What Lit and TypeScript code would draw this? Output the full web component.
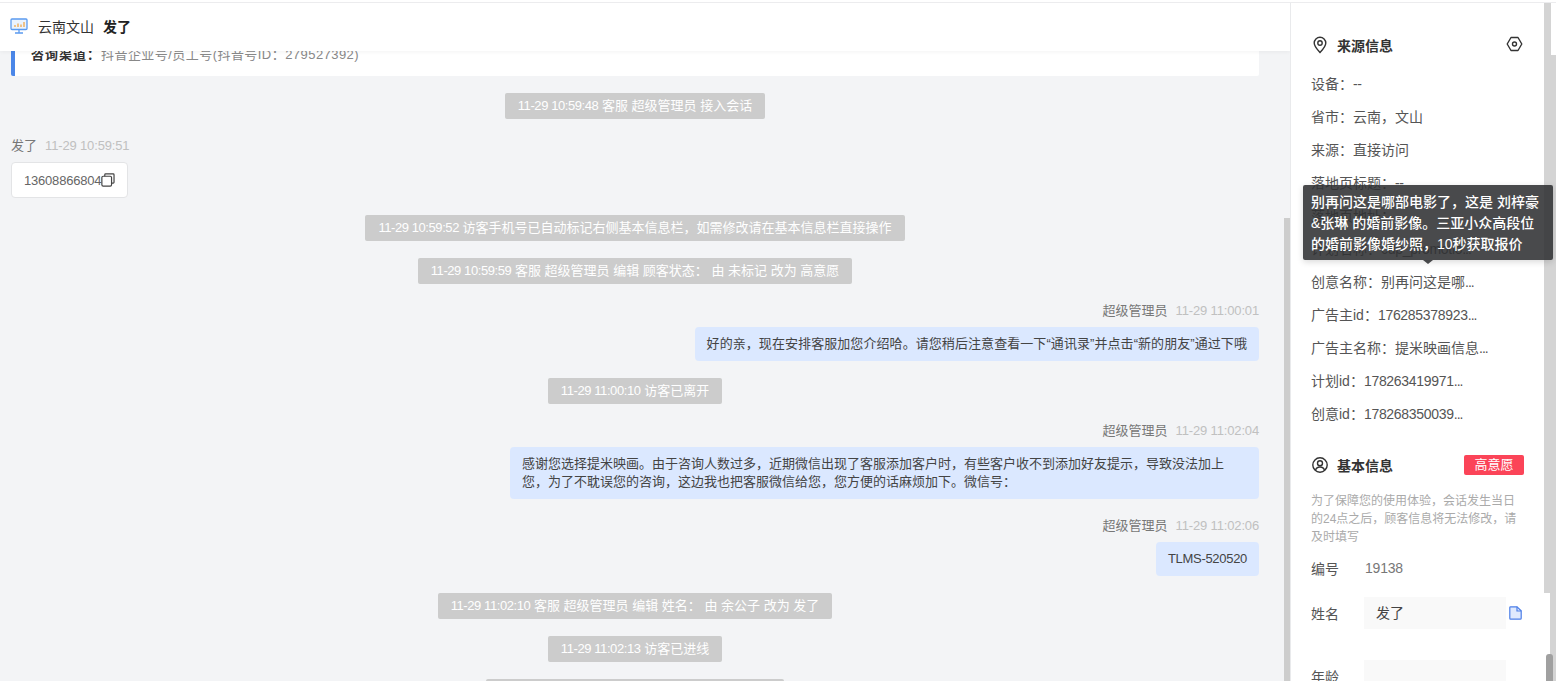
import { LitElement, html, css } from "lit";
import { customElement } from "lit/decorators.js";

type Row =
  | { k: "sys"; time: string; t: string }
  | { k: "in"; name: string; time: string; t: string }
  | { k: "out"; name: string; time: string; t: string };

const ROWS: Row[] = [
  { k: "sys", time: "11-29 10:59:48", t: " 客服 超级管理员 接入会话" },
  { k: "in", name: "发了", time: "11-29 10:59:51", t: "13608866804" },
  { k: "sys", time: "11-29 10:59:52", t: " 访客手机号已自动标记右侧基本信息栏，如需修改请在基本信息栏直接操作" },
  { k: "sys", time: "11-29 10:59:59", t: " 客服 超级管理员 编辑 顾客状态： 由 未标记 改为 高意愿" },
  { k: "out", name: "超级管理员", time: "11-29 11:00:01", t: "好的亲，现在安排客服加您介绍哈。请您稍后注意查看一下“通讯录”并点击“新的朋友”通过下哦" },
  { k: "sys", time: "11-29 11:00:10", t: " 访客已离开" },
  { k: "out", name: "超级管理员", time: "11-29 11:02:04", t: "感谢您选择提米映画。由于咨询人数过多，近期微信出现了客服添加客户时，有些客户收不到添加好友提示，导致没法加上您，为了不耽误您的咨询，这边我也把客服微信给您，您方便的话麻烦加下。微信号：" },
  { k: "out", name: "超级管理员", time: "11-29 11:02:06", t: "TLMS-520520" },
  { k: "sys", time: "11-29 11:02:10", t: " 客服 超级管理员 编辑 姓名： 由 余公子 改为 发了" },
  { k: "sys", time: "11-29 11:02:13", t: " 访客已进线" },
  { k: "sys", time: "11-29 11:02:20", t: " 客服 超级管理员 发送了一条消息" },
];

const INFO = [
  "设备：--",
  "省市：云南，文山",
  "来源：直接访问",
  "落地页标题：--",
  "落地页地址：--",
  "计划名称：cdp_promotio...",
  "创意名称：别再问这是哪...",
  "广告主id：176285378923...",
  "广告主名称：提米映画信息...",
  "计划id：178263419971...",
  "创意id：178268350039...",
];

@customElement("app-root")
export class AppRoot extends LitElement {
  static styles = css`
    :host {
      display: block;
      width: 1556px;
      height: 681px;
      overflow: hidden;
      background: #fff;
      font-family: "Liberation Sans", "Noto Sans CJK SC", sans-serif;
      font-size: 13px;
      color: #333;
    }
    .app {
      display: flex;
      height: 681px;
      box-sizing: border-box;
      border-top: 1px solid #ececee;
      margin-top: 2px;
    }
    .chat {
      position: relative;
      width: 1290px;
      flex: none;
      background: #f3f4f6;
      overflow: hidden;
      border-right: 1px solid #e9eaec;
      box-sizing: content-box;
    }
    .header {
      position: absolute;
      z-index: 2;
      inset: 0 0 auto 0;
      height: 48px;
      box-sizing: border-box;
      padding: 0 0 3px 10px;
      background: #fff;
      display: flex;
      align-items: center;
      gap: 10px;
      box-shadow: 0 1px 4px rgba(0, 0, 0, 0.05);
      font-size: 14px;
    }
    .header svg { display: block; }
    .header .city { color: #333; }
    .header b { color: #222; font-weight: 700; margin-left: -1px; }
    .thumb {
      position: absolute;
      z-index: 3;
      right: 0;
      top: 215px;
      bottom: 0;
      width: 6px;
      background: #cdcdcd;
    }
    .list {
      display: flex;
      flex-direction: column;
      padding: 27px 31px 0 11px;
      width: 1248px;
    }
    .card {
      height: 46px;
      box-sizing: border-box;
      background: #fff;
      border-left: 4px solid #4a86e8;
      border-radius: 2px;
      padding: 14px 0 0 16px;
      color: #888;
      line-height: 22px;
      margin-bottom: 17px;
      letter-spacing: 0.45px;
    }
    .card b { color: #333; font-weight: 700; letter-spacing: 1px; }
    .sys {
      align-self: center;
      height: 26px;
      line-height: 26px;
      padding: 0 13px;
      background: #ccc;
      color: #fff;
      border-radius: 2px;
      white-space: nowrap;
      margin-bottom: 17px;
    }
    .sys .time { letter-spacing: -0.42px; }
    .meta {
      height: 17px;
      padding-top: 1px;
      line-height: 18px;
      color: #777;
      margin-bottom: 8px;
    }
    .meta span { color: #c0c0c0; margin-left: 8px; letter-spacing: -0.15px; }
    .meta.right { text-align: right; }
    .contact {
      align-self: flex-start;
      height: 36px;
      box-sizing: border-box;
      background: #fff;
      border: 1px solid #e3e4e6;
      border-radius: 4px;
      padding: 0 12px;
      display: flex;
      align-items: center;
      color: #666;
      margin-bottom: 17px;
      letter-spacing: -0.2px;
    }
    .bubble {
      align-self: flex-end;
      max-width: 725px;
      background: #dbe8ff;
      border-radius: 4px;
      padding: 8px 12px;
      line-height: 18px;
      color: #444;
      margin-bottom: 17px;
    }
    .bubble.ascii { letter-spacing: -0.3px; }
    .bubble.quoted { letter-spacing: 0.07px; }
    .panel {
      position: relative;
      flex: none;
      width: 253px;
      box-sizing: border-box;
      padding: 30px 20px 0 20px;
      background: #fff;
      overflow: hidden;
      font-size: 14px;
    }
    .title {
      display: flex;
      align-items: center;
      height: 24px;
      font-weight: 700;
      color: #333;
    }
    .title svg { flex: none; }
    .title .ico { margin: 0 9px 0 1px; }
    .title .end { margin: 0 1px 2px auto; }
    .info {
      height: 33px;
      line-height: 33px;
      color: #555;
      white-space: nowrap;
    }
    .info .num { letter-spacing: -0.3px; }
    .info .dots { letter-spacing: -1px; }
    .infos { margin-top: 11px; margin-bottom: 22px; }
    .tag {
      margin-left: auto;
      width: 60px;
      height: 20px;
      line-height: 20px;
      text-align: center;
      background: #fb4458;
      color: #fff;
      font-weight: 400;
      font-size: 13px;
      border-radius: 2px;
    }
    .note {
      margin-top: 15px;
      font-size: 12px;
      line-height: 18px;
      color: #aaa;
      width: 210px;
    }
    .field {
      display: flex;
      align-items: center;
      color: #555;
    }
    .field .label { width: 53px; flex: none; }
    .field .val { color: #777; margin-left: 1px; letter-spacing: -0.2px; }
    .f-no { height: 18px; margin-top: 13px; }
    .f-name { margin-top: 20px; }
    .f-age { margin-top: 31px; }
    .box {
      width: 142px;
      height: 32px;
      line-height: 32px;
      box-sizing: border-box;
      padding-left: 12px;
      background: #f9f9f9;
      color: #444;
      flex: none;
    }
    .f-name svg { margin-left: 3px; flex: none; }
    .rail {
      position: relative;
      flex: 1;
      width: 12px;
    }
    .rail-a {
      position: absolute;
      left: 0;
      top: 0;
      height: 590px;
      width: 7px;
      background: #d4d4d4;
    }
    .rail-b {
      position: absolute;
      right: 0;
      left: 6px;
      top: 52px;
      bottom: 0;
      background: #d4d4d4;
    }
    .rail-c {
      position: absolute;
      left: 2px;
      width: 7px;
      top: 651px;
      bottom: 0;
      border-radius: 3px 3px 0 0;
      background: #a0a0a0;
    }
    .tip {
      position: absolute;
      z-index: 5;
      left: 1303px;
      top: 185px;
      width: 250px;
      height: 75px;
      box-sizing: border-box;
      padding: 7px 8px;
      background: rgba(48, 49, 51, 0.88);
      border-radius: 2px;
      color: #fff;
      font-size: 14px;
      line-height: 21px;
      font-weight: 500;
      box-shadow: 0 2px 6px rgba(0, 0, 0, 0.15);
    }
    .tip::after {
      content: "";
      position: absolute;
      left: 120px;
      bottom: -4px;
      border-left: 5px solid transparent;
      border-right: 5px solid transparent;
      border-top: 4px solid rgba(48, 49, 51, 0.88);
    }
  `;

  private monitor() {
    return html`<svg width="18" height="16" viewBox="0 0 18 16" fill="none">
      <rect x="1" y="1" width="16" height="10.5" rx="1" stroke="#5b9bf0" stroke-width="1.3" fill="#eaf3fe" />
      <path d="M5 9V7M8 9V5.500M11 9V6.500M14 9V4" stroke="#f0a23c" stroke-width="1.2" />
      <path d="M9 11.500V15M5 15h8" stroke="#5b9bf0" stroke-width="1.3" />
    </svg>`;
  }

  private copyIcon() {
    return html`<svg width="14" height="14" viewBox="0 0 13 13" fill="none" stroke="#444" stroke-width="1.1">
      <rect x="0.8" y="3" width="9" height="9.2" rx="1.2" />
      <path d="M3.500 3V1.600c0-.5.4-.8.8-.8h7c.4 0 .8.3.8.8v7c0 .5-.4.8-.8.8H10" />
    </svg>`;
  }

  private info(t: string) {
    const i = t.indexOf("：") + 1;
    const label = t.slice(0, i);
    let value = t.slice(i);
    const hasDots = value.endsWith("...");
    if (hasDots) value = value.slice(0, -3);
    const ascii = /^[\x00-\x7f]+$/.test(value);
    return html`<div class="info">${label}<span class=${ascii ? "num" : ""}>${value}</span>${hasDots
        ? html`<span class="dots">...</span>`
        : ""}</div>`;
  }

  private row(r: Row) {
    if (r.k === "sys") return html`<div class="sys"><span class="time">${r.time}</span>${r.t}</div>`;
    if (r.k === "in")
      return html`<div class="meta">${r.name}<span>${r.time}</span></div>
        <div class="contact">${r.t}${this.copyIcon()}</div>`;
    const cls = /^[\x00-\x7f]+$/.test(r.t) ? "ascii" : r.t.includes("“") ? "quoted" : "";
    return html`<div class="meta right">${r.name}<span>${r.time}</span></div>
      <div class="bubble ${cls}">${r.t}</div>`;
  }

  render() {
    return html`<div class="app">
      <section class="chat">
        <header class="header">
          ${this.monitor()}<span class="city">云南文山</span><b>发了</b>
        </header>
        <div class="list">
          <div class="card"><b>咨询渠道：</b>抖音企业号/员工号(抖音号ID：279527392)</div>
          ${ROWS.map((r) => this.row(r))}
        </div>
        <div class="thumb"></div>
      </section>
      <aside class="panel">
        <div class="title">
          <svg class="ico" width="16" height="18" viewBox="0 0 16 18" fill="none" stroke="#333" stroke-width="1.4">
            <path d="M8 16.500C5 13.200 2.200 10.400 2.200 7a5.800 5.800 0 0 1 11.600 0c0 3.400-2.800 6.200-5.800 9.500z" />
            <circle cx="8" cy="7" r="2.2" />
          </svg>
          来源信息
          <svg class="end" width="17" height="16" viewBox="0 0 17 16" fill="none" stroke="#333" stroke-width="1.4">
            <path d="M5 1.500h7l3.800 6.500-3.800 6.500H5L1.200 8z" stroke-linejoin="round" />
            <circle cx="8.500" cy="8" r="2" />
          </svg>
        </div>
        <div class="infos">${INFO.map((t) => this.info(t))}</div>
        <div class="title">
          <svg class="ico" width="16" height="16" viewBox="0 0 16 16" fill="none" stroke="#333" stroke-width="1.4">
            <circle cx="8" cy="8" r="7.2" />
            <circle cx="8" cy="6.2" r="2.5" />
            <path d="M3.600 13.200c.5-2.200 2.300-3.200 4.400-3.200s3.900 1 4.400 3.200" />
          </svg>
          基本信息
          <span class="tag">高意愿</span>
        </div>
        <div class="note">为了保障您的使用体验，会话发生当日的24点之后，顾客信息将无法修改，请及时填写</div>
        <div class="field f-no"><span class="label">编号</span><span class="val">19138</span></div>
        <div class="field f-name">
          <span class="label">姓名</span>
          <div class="box">发了</div>
          <svg width="13" height="14" viewBox="0 0 13 14" fill="none" stroke="#4d7fe8" stroke-width="1.2">
            <path d="M1.600.8h6.400l4.200 4v7.400c0 .6-.4 1-1 1H1.600c-.5 0-.8-.4-.8-1V1.600c0-.5.3-.8.8-.8z" fill="#dfe9fd" />
            <path d="M8 .8v4.200h4.200" />
          </svg>
        </div>
        <div class="field f-age"><span class="label">年龄</span><div class="box"></div></div>
      </aside>
      <div class="rail">
        <div class="rail-b"></div>
        <div class="rail-a"></div>
        <div class="rail-c"></div>
      </div>
      <div class="tip">别再问这是哪部电影了，这是 刘梓豪&张琳 的婚前影像。三亚小众高段位的婚前影像婚纱照，10秒获取报价</div>
    </div>`;
  }
}
